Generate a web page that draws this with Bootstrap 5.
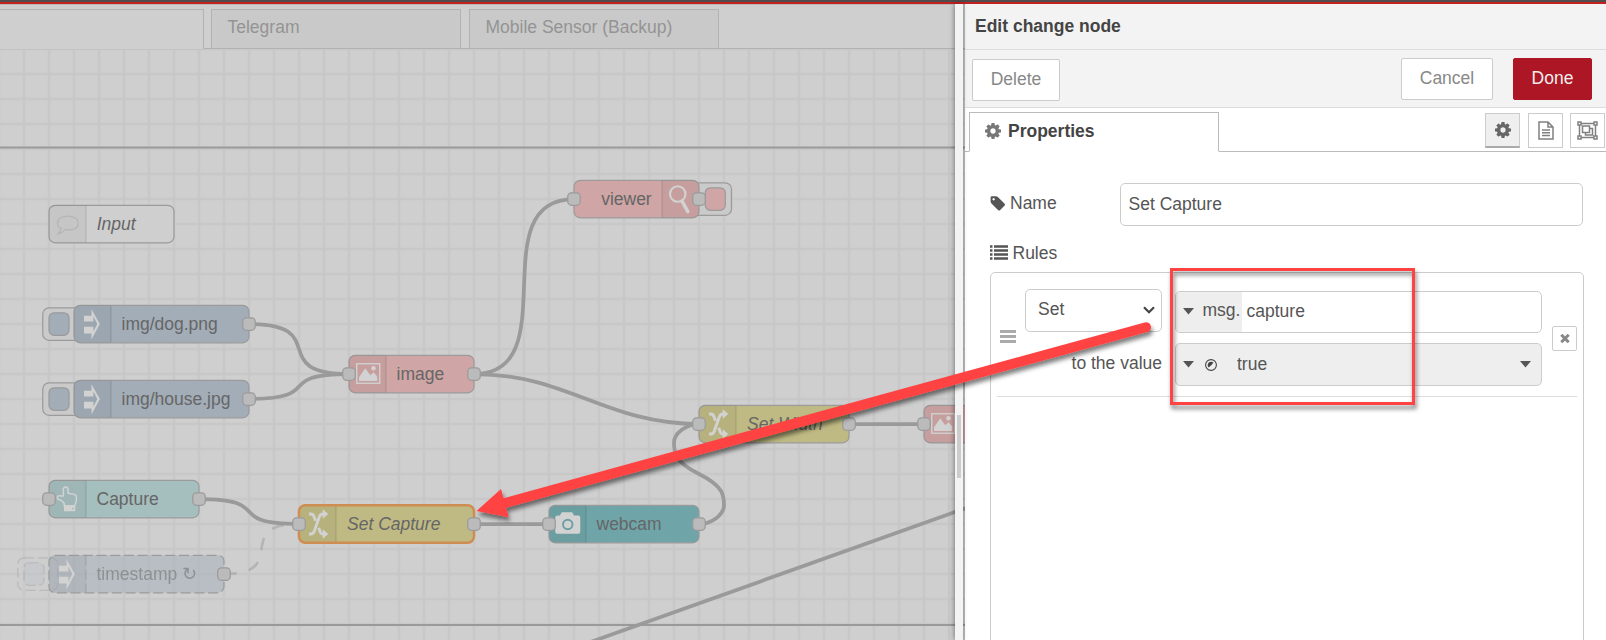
<!DOCTYPE html>
<html lang="en">
<head>
<meta charset="utf-8">
<meta name="viewport" content="width=device-width, initial-scale=1">
<title>Node-RED</title>
<link href="https://cdn.jsdelivr.net/npm/bootstrap@5.3.0/dist/css/bootstrap.min.css" rel="stylesheet">
<style>
  body { font-family: "Liberation Sans", Arial, sans-serif; font-size: 17.5px; line-height: 25px; color: #555; background: #fff; }
  svg { display: block; flex: none; }
  .top-strip { height: 4px; background: #504c4c; border-bottom: 2px solid #c32020; flex: none; }

  /* workspace */
  .workspace { width: 965px; background: #cfcfcf; color: #949494; flex: none; overflow: hidden; }
  .flow-tabs { height: 45px; padding-top: 4px; border-top: 1px solid #b9b9b9; }
  .flow-tab { width: 250px; height: 40px; margin-right: 8px; padding: 5px 15.5px; background: #c9c9c9; border: 1px solid #b2b2b2; }
  .flow-tab.first { width: 204px; margin-right: 7px; border-left: 0; border-bottom-color: #cfcfcf; background: #cfcfcf; }
  .tab-row { height: 40px; box-shadow: inset 0 -1px #b2b2b2; }
  .canvas text { font-size: 14px; fill: #666; }
  .wire { fill: none; stroke: #9a9a9a; stroke-width: 3; }
  .nd { stroke: #9b9b9b; stroke-width: 1; }
  .pt { fill: #bbb; stroke: #9b9b9b; stroke-width: 1; }
  .shade { fill: #000; fill-opacity: .04; }
  .divide { stroke: #000; stroke-opacity: .09; }
  .glyph { fill: #d2d2d2; }

  /* tray */
  .separator { left: 955px; top: 4px; bottom: 0; width: 8px; background: #f3f3f3; box-shadow: -1px 0 5px rgba(0,0,0,.38); }
  .separator::before { content: ""; width: 4px; height: 63px; margin-top: 411px; background: #ccc; }
  .sliver { left: 963px; top: 4px; bottom: 0; width: 2px; background: rgba(0,0,0,.1); }
  .tray { background: #fff; min-width: 0; }
  .tray-title { height: 46px; padding: 10px 10px; background: #f3f3f3; border-bottom: 1px solid #ddd; color: #444; }
  .tray-tools { height: 58px; padding: 8px 14px 0 7px; background: #f3f3f3; border-bottom: 1px solid #ddd; }
  .tool-btn { height: 42px; width: 92px; font: inherit; line-height: 37px; color: #888; background: #fff; border: 1px solid #ccc; border-radius: 2px; padding: 0 0 2px; }
  .tool-btn.delete { width: 88px; margin-top: 1px; }
  .tool-btn.done { width: 79px; background: #ad1625; border-color: #ad1625; color: #eee; margin-left: 20px; }
  .prop-tabs { height: 44px; padding: 4px 0 0 4px; box-shadow: inset 0 -1px #bbb; }
  .prop-tab { width: 250px; height: 40px; border: 1px solid #bbb; border-bottom-color: #fff; color: #444; padding: 0 0 2px 15px; background: #fff; }
  .prop-tab svg { margin-right: 7px; margin-bottom: 1px; }
  .icon-btn { width: 35px; height: 35px; border: 1px solid #ccc; background: #fff; color: #808080; margin-top: 1px; }
  .icon-btn.on { background: #efefef; color: #666; border-bottom: 2px solid #aaa; }
  .form-area { padding: 31px 23px 0 25px; }
  .name-label { width: 130px; }
  .field { height: 43px; border: 1px solid #ccc; border-radius: 5px; padding: 0 7.5px; }
  .rules { height: 400px; margin: 6px -1px 0 0; border: 1px solid #ccc; border-radius: 5px; padding: 16px 6px 0; }
  .rule { height: 108px; border-bottom: 1px solid #ddd; padding-left: 3px; }
  .op-field { width: 137px; padding: 0 6px 2px 12px; }
  .typed { width: 367px; border: 1px solid #ccc; border-radius: 5px; overflow: hidden; }
  .prefix { background: #eee; width: 66px; padding-left: 7px; }
  .typed.whole { height: 43px; margin-top: 10px; background: #eee; padding: 0 10px 0 7px; }
  .del-btn { width: 25px; height: 25px; border: 1px solid #ccc; border-radius: 2px; color: #888; }

  .notes { left: 0; top: 0; pointer-events: none; }
</style>
</head>
<body class="vh-100 overflow-hidden d-flex flex-column position-relative">
<div class="top-strip"></div>
<div class="d-flex flex-grow-1 overflow-hidden">

  <section class="workspace d-flex flex-column">
    <div class="flow-tabs">
      <div class="tab-row d-flex">
        <div class="flow-tab first"></div>
        <div class="flow-tab">Telegram</div>
        <div class="flow-tab">Mobile Sensor (Backup)</div>
      </div>
    </div>
    <svg class="canvas" width="965" height="591" viewBox="0 49 965 591" font-family="Liberation Sans, Arial, sans-serif">
      <defs>
        <pattern id="grid" x="11.5" y="61.5" width="25" height="25" patternUnits="userSpaceOnUse">
          <path d="M0 12.5H25M12.5 0V25" stroke="#c6c6c6" stroke-width="2"/>
        </pattern>
        <g id="i-inject" class="glyph">
          <path fill-rule="evenodd" d="M8 -6.7H14V-11.8L20.7 0L14 12.3V7.5H8V2.1H15.5V6L18.6 0L15.5 -6V-2.1H8Z"/>
        </g>
        <g id="i-image">
          <rect x="6.2" y="-8.2" width="18.4" height="15.6" fill="none" stroke="#d2d2d2" stroke-width="1.1"/>
          <path class="glyph" d="M8 5.5V2.5L13 -4.6L17 1L19.6 -1.5L22.6 2V5.5Z"/><circle class="glyph" cx="19.6" cy="-4.7" r="1.8"/>
        </g>
        <g id="i-change">
          <path d="M8 8H9.500Q11.500 8 12.300 5.600L16.200 -5.600Q17 -8 19 -8H20M8 -8H9.500Q11.300 -8 12 -6L13.200 -2.600M15.800 3L16.600 5.400Q17.400 8 19.200 8H20" fill="none" stroke="#d2d2d2" stroke-width="2.300"/>
          <path class="glyph" d="M19 -11.800L23.400 -8L19 -4.200ZM19 4.200L23.400 8L19 11.800Z"/>
        </g>
      </defs>
      <rect y="49" width="965" height="591" fill="url(#grid)"/>
      <path d="M0 49.5H204" stroke="#c3c3c3"/>
      <path d="M0 147.5H965M0 625H965" stroke="#9a9a9a" stroke-width="2"/>
      <g transform="translate(24 24) scale(1.25)">
        <path class="wire" d="M180 240C247 240 193 280 260 280M180 300C241.800 300 198.200 280 260 280M360 280C435 280 365 140 440 140M360 280C435 280 465 320 540 320M140 380C202 380 158 400 220 400M360 400H420M660 320H720"/>
        <path class="wire" d="M540 400C550 400 560 392.500 560 385S560 370 540 360S520 342.500 520 335S530 320 540 320"/>
        <path class="wire" d="M453 494.500L746.500 389.800L760 385"/>
        <path fill="none" stroke="#9a9a9a" stroke-width="2" stroke-dasharray="10 10" opacity=".5" d="M160 440C214 440 166 400 220 400"/>

        <g transform="translate(20 160)">
          <rect class="nd" y="-15" width="100" height="30" rx="5" fill="#cfcfcf"/>
          <path class="shade" d="M5 -15H30V15H5Q0 15 0 10V-10Q0 -15 5 -15Z"/><path class="divide" d="M29.500 -14.500V14.500"/>
          <path d="M15 -6.300C20 -6.300 23.300 -4 23.300 -.5S20 4.700 15 4.700Q13.800 4.700 12.800 4.500Q10.500 7.300 7.300 8Q9.300 6 9.700 3.500Q6.800 2 6.800 -.5C6.800 -4 10 -6.300 15 -6.300Z" fill="none" stroke="#b5b5b5"/>
          <text x="38.200" y="5" font-style="italic">Input</text>
        </g>

        <g transform="translate(440 140)">
          <rect class="nd" x="94" y="-13" width="32" height="26" rx="5" fill="#cacaca"/>
          <rect class="nd" x="105" y="-9" width="16" height="18" rx="4" fill="#cfa5a5"/>
          <rect class="nd" y="-15" width="100" height="30" rx="5" fill="#cfa5a5"/>
          <path class="shade" d="M70 -15H95Q100 -15 100 -10V10Q100 15 95 15H70Z"/><path class="divide" d="M70.500 -14.500V14.500"/>
          <circle cx="83" cy="-4" r="6.200" fill="none" stroke="#d2d2d2" stroke-width="1.700"/><path d="M86.500 1.800L91 10" stroke="#d2d2d2" stroke-width="2.900" stroke-linecap="round"/>
          <text x="21.700" y="5">viewer</text>
          <rect class="pt" x="-5" y="-5" width="10" height="10" rx="3"/><rect class="pt" x="95" y="-5" width="10" height="10" rx="3"/>
        </g>

        <g transform="translate(40 240)">
          <rect class="nd" x="-25" y="-13" width="32" height="26" rx="5" fill="#cacaca"/>
          <rect class="nd" x="-20" y="-9" width="16" height="18" rx="4" fill="#a2adb8"/>
          <rect class="nd" y="-15" width="140" height="30" rx="5" fill="#a2adb8"/>
          <path class="shade" d="M5 -15H30V15H5Q0 15 0 10V-10Q0 -15 5 -15Z"/><path class="divide" d="M29.500 -14.500V14.500"/>
          <use href="#i-inject"/><text x="38" y="5">img/dog.png</text>
          <rect class="pt" x="135" y="-5" width="10" height="10" rx="3"/>
        </g>

        <g transform="translate(40 300)">
          <rect class="nd" x="-25" y="-13" width="32" height="26" rx="5" fill="#cacaca"/>
          <rect class="nd" x="-20" y="-9" width="16" height="18" rx="4" fill="#a2adb8"/>
          <rect class="nd" y="-15" width="140" height="30" rx="5" fill="#a2adb8"/>
          <path class="shade" d="M5 -15H30V15H5Q0 15 0 10V-10Q0 -15 5 -15Z"/><path class="divide" d="M29.500 -14.500V14.500"/>
          <use href="#i-inject"/><text x="38" y="5">img/house.jpg</text>
          <rect class="pt" x="135" y="-5" width="10" height="10" rx="3"/>
        </g>

        <g transform="translate(260 280)">
          <rect class="nd" y="-15" width="100" height="30" rx="5" fill="#cfa5a5"/>
          <path class="shade" d="M5 -15H30V15H5Q0 15 0 10V-10Q0 -15 5 -15Z"/><path class="divide" d="M29.500 -14.500V14.500"/>
          <use href="#i-image"/><text x="38" y="5">image</text>
          <rect class="pt" x="-5" y="-5" width="10" height="10" rx="3"/><rect class="pt" x="95" y="-5" width="10" height="10" rx="3"/>
        </g>

        <g transform="translate(20 380)">
          <rect class="nd" y="-15" width="120" height="30" rx="5" fill="#a5bebe"/>
          <path class="shade" d="M5 -15H30V15H5Q0 15 0 10V-10Q0 -15 5 -15Z"/><path class="divide" d="M29.500 -14.500V14.500"/>
          <path d="M12.200 5.500V3.500L9.500 .8Q6.500 .5 6.700 -1.300T9.500 -2.400H11.500V-8Q11.700 -9.700 13.300 -9.700T15.200 -8V-4.600L20 -3.700Q22 -3.200 21.900 -1.500V1.500L20.500 5.500Z" fill="none" stroke="#d2d2d2" stroke-width="1.200" stroke-linejoin="round"/>
          <path class="glyph" fill-rule="evenodd" d="M12 5H21V9.800H12ZM18.500 7V8.200H19.600V7Z"/>
          <text x="38" y="5">Capture</text>
          <rect class="pt" x="-5" y="-5" width="10" height="10" rx="3"/><rect class="pt" x="115" y="-5" width="10" height="10" rx="3"/>
        </g>

        <g transform="translate(20 440)">
          <g opacity=".4" stroke-dasharray="8 3">
            <rect class="nd" x="-25" y="-13" width="32" height="26" rx="5" fill="#cdcdcd"/>
            <rect class="nd" x="-20" y="-9" width="16" height="18" rx="4" fill="#bcc2c8"/>
          </g>
          <rect y="-15" width="140" height="30" rx="5" fill="#a2adb8" opacity=".5"/>
          <path class="shade" d="M5 -15H30V15H5Q0 15 0 10V-10Q0 -15 5 -15Z"/><path class="divide" stroke-dasharray="8 3" d="M29.500 -14.500V14.500"/>
          <rect class="nd" y="-15" width="140" height="30" rx="5" fill="none" stroke-dasharray="8 3"/>
          <use href="#i-inject"/><text x="38" y="5" opacity=".5">timestamp ↻</text>
          <rect class="pt" x="135" y="-5" width="10" height="10" rx="3"/>
        </g>

        <g transform="translate(220 400)">
          <rect y="-15" width="140" height="30" rx="5" fill="#bfba83" stroke="#d08d52" stroke-width="2"/>
          <path class="shade" d="M5 -14H30V14H5Q1 14 1 10V-10Q1 -14 5 -14Z"/><path class="divide" d="M29.500 -14V14"/>
          <use href="#i-change"/><text x="38.400" y="5" font-style="italic">Set Capture</text>
          <rect class="pt" x="-5" y="-5" width="10" height="10" rx="3"/><rect class="pt" x="135" y="-5" width="10" height="10" rx="3"/>
        </g>

        <g transform="translate(420 400)">
          <rect class="nd" y="-15" width="120" height="30" rx="5" fill="#6fa5a8"/>
          <path class="shade" d="M5 -15H30V15H5Q0 15 0 10V-10Q0 -15 5 -15Z"/><path class="divide" d="M29.500 -14.500V14.500"/>
          <path class="glyph" d="M7 -6.800H8.700L10.200 -9.500H18.500L20 -6.800H23.500Q25 -6.800 25 -5.300V6Q25 7.800 23.500 7.800H6.500Q5 7.800 5 6V-5.300Q5 -6.800 7 -6.800Z"/>
          <circle cx="15" cy=".4" r="3.800" fill="none" stroke="#6b9fa2" stroke-width="1.500"/>
          <text x="38" y="5">webcam</text>
          <rect class="pt" x="-5" y="-5" width="10" height="10" rx="3"/><rect class="pt" x="115" y="-5" width="10" height="10" rx="3"/>
        </g>

        <g transform="translate(540 320)">
          <rect class="nd" y="-15" width="120" height="30" rx="5" fill="#bfba83"/>
          <path class="shade" d="M5 -15H30V15H5Q0 15 0 10V-10Q0 -15 5 -15Z"/><path class="divide" d="M29.500 -14.500V14.500"/>
          <use href="#i-change"/><text x="38.400" y="5" font-style="italic">Set Width</text>
          <rect class="pt" x="-5" y="-5" width="10" height="10" rx="3"/><rect class="pt" x="115" y="-5" width="10" height="10" rx="3"/>
        </g>

        <g transform="translate(720 320)">
          <rect class="nd" y="-15" width="100" height="30" rx="5" fill="#cfa5a5"/>
          <path class="shade" d="M5 -15H30V15H5Q0 15 0 10V-10Q0 -15 5 -15Z"/>
          <use href="#i-image"/>
          <rect class="pt" x="-5" y="-5" width="10" height="10" rx="3"/>
        </g>
      </g>
    </svg>
  </section>

  <section class="tray flex-grow-1">
    <div class="tray-title fw-bold">Edit change node</div>
    <div class="tray-tools d-flex">
      <button class="tool-btn delete">Delete</button>
      <button class="tool-btn ms-auto">Cancel</button>
      <button class="tool-btn done">Done</button>
    </div>
    <div class="prop-tabs d-flex">
      <div class="prop-tab fw-bold d-flex align-items-center">
        <svg width="16" height="16" viewBox="128 128 1536 1536" fill="#777"><path id="cog" d="M1152 896q0-106-75-181t-181-75-181 75-75 181 75 181 181 75 181-75 75-181zm512-109v222q0 12-8 23t-20 13l-185 28q-19 54-39 91 35 50 107 138 10 12 10 25t-9 23q-27 37-99 108t-94 71q-12 0-26-9l-138-108q-44 23-91 38-16 136-29 186-7 28-36 28h-222q-14 0-24.500-8.500t-11.500-21.500l-28-184q-49-16-90-37l-141 107q-10 9-25 9-14 0-25-11-126-114-165-168-7-10-7-23 0-12 8-23 15-21 51-66.500t54-70.500q-27-50-41-99l-183-27q-13-2-21-12.500t-8-23.500v-222q0-12 8-23t19-13l186-28q14-46 39-92-40-57-107-138-10-12-10-24 0-10 9-23 26-36 98.500-107.500t94.500-71.500q13 0 26 10l138 107q44-23 91-38 16-136 29-186 7-28 36-28h222q14 0 24.500 8.500t11.500 21.500l28 184q49 16 90 37l142-107q9-9 24-9 13 0 25 10 129 119 165 170 7 8 7 22 0 12-8 23-15 21-51 66.500t-54 70.500q26 50 41 98l183 28q13 2 21 12.500t8 23.500z"/></svg>
        Properties
      </div>
      <div class="d-flex ms-auto" style="margin-right:1px">
        <div class="icon-btn on d-flex align-items-center justify-content-center me-2"><svg width="16" height="16" viewBox="128 128 1536 1536" fill="currentColor"><use href="#cog"/></svg></div>
        <div class="icon-btn d-flex align-items-center justify-content-center" style="margin-right:7px"><svg width="16" height="19" viewBox="0 0 16 19" fill="none" stroke="currentColor" stroke-width="1.500"><path d="M1 1H10L15 6V18H1ZM10 1V6H15M4 9H12M4 11.700H12M4 14.400H12"/></svg></div>
        <div class="icon-btn d-flex align-items-center justify-content-center"><svg width="21" height="19" viewBox="0 0 21 19" fill="none" stroke="currentColor" stroke-width="1.500"><path d="M4 2.500H17M4 16.500H17M2.500 4V15M18.500 4V15M1 1H4V4H1ZM17 1H20V4H17ZM1 15H4V18H1ZM17 15H20V18H17ZM5.500 5H12.500V11.500H5.500ZM12.500 7.500H15.500V14H8.500V11.500"/></svg></div>
      </div>
    </div>

    <div class="form-area">
      <div class="d-flex">
        <div class="name-label d-flex align-items-center" style="padding-bottom:3px">
          <svg width="15" height="15" viewBox="64 128 1580 1536" fill="#555" style="margin-right:5px"><path d="M576 448q0-53-37.500-90.500t-90.500-37.500-90.500 37.500-37.500 90.500 37.500 90.500 90.500 37.500 90.500-37.500 37.500-90.500zm1067 576q0 53-37 90l-491 492q-39 37-91 37-53 0-90-37l-715-716q-38-37-64.500-101t-26.500-117v-416q0-52 38-90t90-38h416q53 0 117 26.500t102 64.500l715 714q37 39 37 91z"/></svg>
          Name
        </div>
        <div class="field flex-grow-1 d-flex align-items-center">Set Capture</div>
      </div>
      <div class="d-flex align-items-center" style="margin-top:15px;height:25px">
        <svg width="18" height="15" viewBox="0 0 18 15" stroke="#555" stroke-width="2.400" style="margin:0 4.500px 2px 0"><path d="M0 1.500H2.500M4 1.500H18M0 5.500H2.500M4 5.500H18M0 9.500H2.500M4 9.500H18M0 13.500H2.500M4 13.500H18"/></svg>
        Rules
      </div>
      <div class="rules">
        <div class="rule d-flex">
          <svg width="16" height="13" viewBox="0 0 16 13" stroke="#aaa" stroke-width="3" style="margin:41px 9px 0 0"><path d="M0 1.500H16M0 6.500H16M0 11.500H16"/></svg>
          <div style="width:137px">
            <div class="field op-field d-flex align-items-center justify-content-between">Set
              <svg width="12" height="8" viewBox="0 0 12 8" fill="none" stroke="#444" stroke-width="2.200"><path d="M1 1.200L6 6.200L11 1.200"/></svg>
            </div>
            <div class="text-end text-nowrap" style="margin-top:19px">to the value</div>
          </div>
          <div style="margin:2px 0 0 13px">
            <div class="typed d-flex" style="height:42px">
              <div class="prefix d-flex align-items-center pb-1"><svg width="11" height="7" viewBox="0 0 11 7" fill="#555" style="margin-top:3px"><path d="M0 0H11L5.500 6.500Z"/></svg><span style="margin-left:8.500px">msg.</span></div>
              <div class="d-flex align-items-center" style="padding:0 0 1px 4.500px">capture</div>
            </div>
            <div class="typed whole d-flex align-items-center">
              <svg width="11" height="7" viewBox="0 0 11 7" fill="#555"><path d="M0 0H11L5.500 6.500Z"/></svg>
              <svg width="12" height="12" viewBox="0 0 12 12" style="margin:0 20px 0 11px"><circle cx="6" cy="6" r="5.400" fill="none" stroke="#444" stroke-width="1.100"/><path d="M6 2.700A3.300 3.300 0 0 0 3.700 8.400L6.500 5.900L8.500 3.600Q7.500 2.700 6 2.700Z" fill="#444"/></svg>
              true
              <svg class="ms-auto" width="11" height="7" viewBox="0 0 11 7" fill="#555"><path d="M0 0H11L5.500 6.500Z"/></svg>
            </div>
          </div>
          <div class="del-btn d-flex align-items-center justify-content-center ms-auto" style="margin-top:37px"><svg width="10" height="9" viewBox="0 0 10 9" stroke="currentColor" stroke-width="3"><path d="M1.300 .8L8.700 8.200M8.700 .8L1.300 8.200"/></svg></div>
        </div>
      </div>
    </div>
  </section>
</div>

<div class="separator position-absolute d-flex justify-content-center"></div>
<div class="sliver position-absolute"></div>

<!-- callout box and arrow over the editor -->
<svg class="notes position-absolute" width="1606" height="640" viewBox="0 0 1606 640">
  <defs><filter id="drop" x="-5%" y="-10%" width="110%" height="125%"><feDropShadow dx="1.500" dy="4" stdDeviation="2.200" flood-color="#000" flood-opacity=".5"/></filter></defs>
  <rect x="1171.500" y="269.500" width="242" height="134" fill="none" stroke="#ff4343" stroke-width="3" filter="url(#drop)"/>
  <g filter="url(#drop)"><path d="M505 503L1146 327.200" stroke="#ff4343" stroke-width="10" stroke-linecap="round"/><path d="M476.500 511L501 489L508.700 517.300Z" fill="#ff4343"/></g>
</svg>
<script src="https://cdn.jsdelivr.net/npm/bootstrap@5.3.0/dist/js/bootstrap.bundle.min.js"></script>
</body>
</html>
